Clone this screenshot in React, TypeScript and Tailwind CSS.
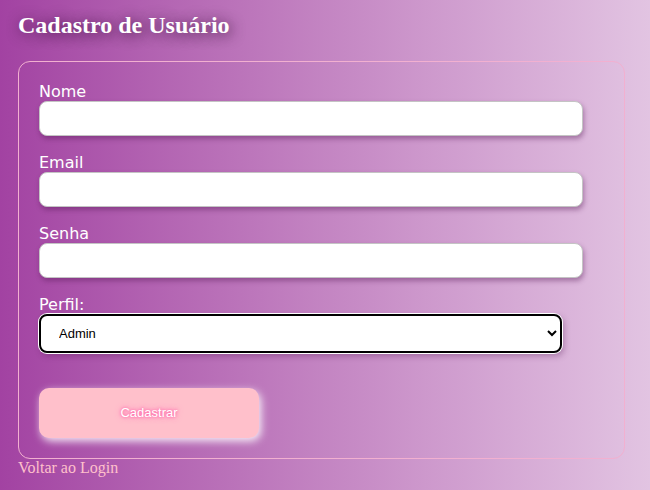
import { useState } from 'react'

export default function App() {
  const [perfil, setPerfil] = useState('admin')

  const label = 'block h-[19px] text-[16px] leading-[19px] text-white font-["DejaVu_Sans",sans-serif]'
  const input =
    'block w-[544px] h-[35px] rounded-[8px] border border-[#c4c4c4] bg-white px-2 mb-[17px] shadow-[1px_3px_5px_rgba(80,20,80,0.4)] outline-none'

  return (
    <div className="min-h-[490px] w-[650px] bg-gradient-to-r from-[#a242a2] to-[#e2c4e2] px-[18px] pt-[12px] font-['Liberation_Serif',serif]">
      <h2 className="h-[27px] mb-[22px] text-[24px] leading-[27px] font-bold text-white [text-shadow:2px_2px_14px_rgba(50,10,50,0.85)]">
        Cadastro de Usuário
      </h2>

      <form
        className="w-[607px] rounded-[12px] border border-[#f2b0d0] p-[20px]"
        onSubmit={e => e.preventDefault()}
      >
        <label className={label}>Nome</label>
        <input className={input} type="text" />

        <label className={label}>Email</label>
        <input className={input} type="email" />

        <label className={label}>Senha</label>
        <input className={input} type="password" />

        <label className={label}>Perfil:</label>
        <select
          value={perfil}
          onChange={e => setPerfil(e.target.value)}
          className="block w-[523px] h-[39px] rounded-[8px] border-2 border-black bg-white pl-[14px] pr-2 text-[13px] text-black font-['Liberation_Sans',sans-serif] shadow-[0_0_0_1px_#ffffff,2px_3px_6px_rgba(80,20,80,0.35)]"
        >
          <option value="admin">Admin</option>
          <option value="usuario">Usuário</option>
        </select>

        <button
          type="submit"
          className="mt-[35px] block w-[220px] h-[50px] rounded-[10px] bg-[#ffc0cb] text-[13px] text-white font-['Liberation_Sans',sans-serif] shadow-[2px_3px_8px_rgba(255,255,255,0.9)] [text-shadow:0_0_3px_#ff4fa0,0_0_6px_#ff69b4]"
        >
          Cadastrar
        </button>
      </form>

      <a href="#" className="block text-[16px] leading-[18px] text-[#ffc0cb] no-underline">
        Voltar ao Login
      </a>
    </div>
  )
}
